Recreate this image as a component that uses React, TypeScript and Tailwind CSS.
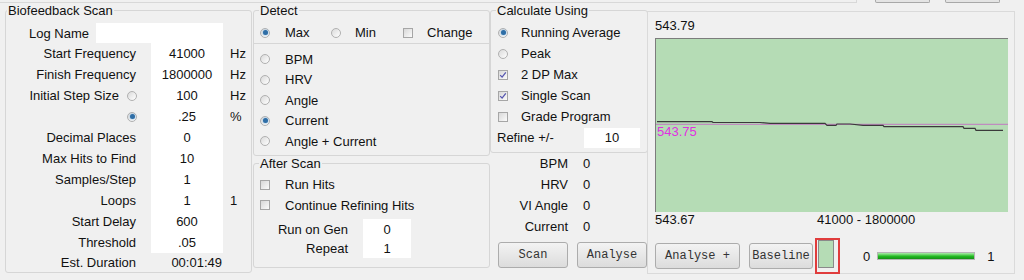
import React from "react";

function Radio({ checked }: { checked?: boolean }) {
  return (
    <span className="inline-flex w-[10px] h-[10px] shrink-0 items-center justify-center rounded-full border border-[#b0b0b0] bg-linear-to-br from-[#dadada] to-[#ffffff]">
      {checked && <span className="w-[5px] h-[5px] rounded-full bg-[#2f6ea6] shadow-[0_0_2px_#6aaae0]" />}
    </span>
  );
}

function Check({ checked }: { checked?: boolean }) {
  return (
    <span className="inline-flex w-[10px] h-[10px] shrink-0 items-center justify-center border border-[#a6a6a6] bg-linear-to-br from-[#d8d8d8] to-[#fbfbfb]">
      {checked && (
        <svg width="8" height="8" viewBox="0 0 8 8">
          <path d="M1.2 4.1 L3.1 6.1 L6.8 1.4" fill="none" stroke="#5656b0" strokeWidth="1.3" />
        </svg>
      )}
    </span>
  );
}

function Group({
  title,
  className,
  legendClass,
  children,
}: {
  title: string;
  className: string;
  legendClass: string;
  children?: React.ReactNode;
}) {
  return (
    <fieldset className={"border border-[#d6d6d6] rounded-[3px] " + className}>
      <legend className={"px-[1px] text-[13px] leading-[15px] " + legendClass}>{title}</legend>
      {children}
    </fieldset>
  );
}

function Btn({ label, w }: { label: string; w: string }) {
  return (
    <div
      className={
        "h-[26px] shrink-0 flex items-center justify-center border border-[#acacac] rounded-[3px] bg-linear-to-b from-[#f3f3f3] to-[#dcdcdc] text-[12px] text-[#333] font-['Liberation_Mono',monospace] " +
        w
      }
    >
      {label}
    </div>
  );
}

const scanRows: { label: string; value: string; unit: string; radio?: "on" | "off" }[] = [
  { label: "Start Frequency", value: "41000", unit: "Hz" },
  { label: "Finish Frequency", value: "1800000", unit: "Hz" },
  { label: "Initial Step Size", value: "100", unit: "Hz", radio: "off" },
  { label: "", value: ".25", unit: "%", radio: "on" },
  { label: "Decimal Places", value: "0", unit: "" },
  { label: "Max Hits to Find", value: "10", unit: "" },
  { label: "Samples/Step", value: "1", unit: "" },
  { label: "Loops", value: "1", unit: "1" },
  { label: "Start Delay", value: "600", unit: "" },
  { label: "Threshold", value: ".05", unit: "" },
];

const detectRows: { label: string; checked?: boolean }[] = [
  { label: "BPM" },
  { label: "HRV" },
  { label: "Angle" },
  { label: "Current", checked: true },
  { label: "Angle + Current" },
];

export default function App() {
  return (
    <div className="w-[1024px] h-[280px] overflow-hidden bg-[#f0f0f0] text-[13px] leading-[15px] text-[#111] font-['Liberation_Sans',Arial,sans-serif]">
      {/* top strip */}
      <div className="h-[3px] flex">
        <div className="w-[857px] h-[3px] border-b border-r border-[#d8d8d8]" />
        <div className="ml-[18px] w-[55px] h-[3px] border border-t-0 border-[#a8a8a8] bg-[#e4e4e4] rounded-b-[2px]" />
        <div className="ml-[15px] w-[55px] h-[3px] border border-t-0 border-[#a8a8a8] bg-[#e4e4e4] rounded-b-[2px]" />
      </div>

      <div className="flex items-start pl-[5px]">
        {/* Column 1 */}
        <Group title="Biofeedback Scan" className="w-[247px] h-[270px] shrink-0" legendClass="ml-[1px]">
          <div className="mt-[5px] h-[20px] flex items-center">
            <span className="w-[90px] pl-[23px]">Log Name</span>
            <div className="w-[127px] h-[20px] bg-white" />
          </div>
          {scanRows.map((r, i) => (
            <div key={i} className="h-[21px] flex items-center">
              <div className={"w-[131px] h-full flex items-center justify-end gap-[8px] " + (r.radio ? "" : "pr-[1px]")}>
                {r.label && <span>{r.label}</span>}
                {r.radio && <Radio checked={r.radio === "on"} />}
              </div>
              <div className="w-[14px]" />
              <div className="w-[72px] h-full bg-white flex items-center justify-center">{r.value}</div>
              <span className="pl-[7px]">{r.unit}</span>
            </div>
          ))}
          <div className="h-[18px] flex items-center">
            <div className="w-[131px] text-right pr-[1px]">Est. Duration</div>
            <div className="w-[14px]" />
            <div className="w-[72px] text-right pr-[1px]">00:01:49</div>
          </div>
        </Group>

        {/* Column 2 */}
        <div className="ml-[1px] w-[237px] shrink-0 flex flex-col">
          <Group title="Detect" className="w-[237px] h-[153px]" legendClass="ml-[5px]">
            <div className="mt-[4px] h-[21px] flex items-center">
              <div className="w-[77px] pl-[6px] flex items-center">
                <Radio checked />
                <span className="ml-[15px]">Max</span>
              </div>
              <div className="w-[72px] flex items-center">
                <Radio />
                <span className="ml-[14px]">Min</span>
              </div>
              <div className="flex items-center">
                <Check />
                <span className="ml-[14px]">Change</span>
              </div>
            </div>
            <div className="h-[1px] bg-[#d6d6d6]" />
            <div className="mt-[5px] flex flex-col">
              {detectRows.map((r) => (
                <div key={r.label} className="h-[20.5px] pl-[6px] flex items-center">
                  <Radio checked={r.checked} />
                  <span className="ml-[15px]">{r.label}</span>
                </div>
              ))}
            </div>
          </Group>
          <Group title="After Scan" className="w-[237px] h-[112px]" legendClass="ml-[5px]">
            <div className="mt-[3.5px] h-[20.5px] pl-[6px] flex items-center">
              <Check />
              <span className="ml-[15px]">Run Hits</span>
            </div>
            <div className="h-[20.5px] pl-[6px] flex items-center">
              <Check />
              <span className="ml-[15px]">Continue Refining Hits</span>
            </div>
            <div className="mt-[3.5px] h-[20px] flex items-center">
              <div className="w-[94px] text-right">Run on Gen</div>
              <div className="w-[15px]" />
              <div className="w-[48px] h-full bg-white flex items-center justify-center">0</div>
            </div>
            <div className="h-[19px] flex items-center">
              <div className="w-[94px] text-right">Repeat</div>
              <div className="w-[15px]" />
              <div className="w-[48px] h-full bg-white flex items-center justify-center">1</div>
            </div>
          </Group>
        </div>

        {/* Column 3 */}
        <div className="w-[158px] shrink-0 flex flex-col">
          <Group title="Calculate Using" className="w-[158px] h-[150px]" legendClass="ml-[5px]">
            <div className="mt-[4px] flex flex-col">
              {[
                { t: "Running Average", el: <Radio checked /> },
                { t: "Peak", el: <Radio /> },
                { t: "2 DP Max", el: <Check checked /> },
                { t: "Single Scan", el: <Check checked /> },
                { t: "Grade Program", el: <Check /> },
              ].map((r) => (
                <div key={r.t} className="h-[21px] pl-[7px] flex items-center">
                  {r.el}
                  <span className="ml-[13px]">{r.t}</span>
                </div>
              ))}
              <div className="h-[21px] flex items-center">
                <span className="w-[93px] pl-[6px]">Refine +/-</span>
                <div className="w-[56px] h-[20px] bg-white flex items-center justify-center">10</div>
              </div>
            </div>
          </Group>
          <div className="flex flex-col">
            {[
              ["BPM", "0"],
              ["HRV", "0"],
              ["VI Angle", "0"],
              ["Current", "0"],
            ].map(([l, v]) => (
              <div key={l} className="h-[21px] flex items-center">
                <span className="w-[78px] text-right">{l}</span>
                <span className="ml-[15px]">{v}</span>
              </div>
            ))}
          </div>
          <div className="mt-[5px] flex">
            <div className="ml-[8px]">
              <Btn label="Scan" w="w-[70px]" />
            </div>
            <div className="ml-[9px]">
              <Btn label="Analyse" w="w-[70px]" />
            </div>
          </div>
        </div>

        {/* Chart panel */}
        <div className="mt-[8px] ml-[-1px] w-[368px] h-[263px] shrink-0 border border-[#dadada] pl-[7px] flex flex-col">
          <div className="mt-[6px] leading-[15px]">543.79</div>
          <div className="mt-[5px] relative w-[353px] h-[174px] bg-[#b5dcb5] border-t border-l border-[#7c7c7c]">
            <svg className="block" width="352" height="173" viewBox="0 0 352 173">
              <line x1="0" y1="85.3" x2="352" y2="85.3" stroke="#c27ac2" strokeWidth="1" />
              <polyline
                fill="none"
                stroke="#3a3a3a"
                strokeWidth="1.2"
                points="1,82.7 56,82.7 57,83.5 104,83.5 114,84.3 169,84.3 171,86.3 180,86.3 181,85 194,85 207,86.3 227,86.3 228,87.7 307,87.7 308,89.3 319,89.3 320,91.3 347,91.3"
              />
            </svg>
            <span className="absolute left-[1px] top-[85px] text-[#e030e0]">543.75</span>
          </div>
          <div className="h-[16px] leading-[16px] flex">
            <span className="w-[162px]">543.67</span>
            <span>41000 - 1800000</span>
          </div>
          <div className="mt-[10px] h-[36px] flex items-center">
            <Btn label="Analyse +" w="w-[85px]" />
            <div className="ml-[9px]">
              <Btn label="Baseline" w="w-[64px]" />
            </div>
            <div className="ml-[2px] w-[25px] h-[36px] border-2 border-[#e03c3c] flex items-start">
              <div className="ml-[1px] w-[16px] h-[28px] bg-[#b5dcb5] border border-[#8a8a8a]" />
            </div>
            <span className="ml-[23px]">0</span>
            <div className="ml-[7px] w-[98px] h-[8px] border border-[#b4b4b4] bg-linear-to-b from-[#a8eca8] via-[#22c022] to-[#168e16]" />
            <span className="ml-[12px]">1</span>
          </div>
        </div>
      </div>
    </div>
  );
}
